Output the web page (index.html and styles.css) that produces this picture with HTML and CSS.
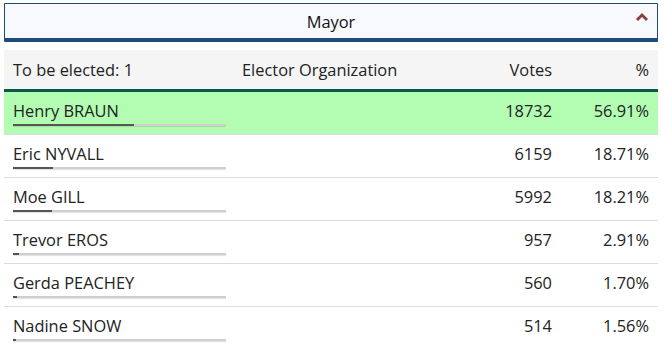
FILE: index.html
```html
<!DOCTYPE html>
<html>
<head>
<meta charset="utf-8">
<link rel="stylesheet" href="styles.css">
</head>
<body>
<div class="wrap">
  <div class="race-head">
    <span class="race-title">Mayor</span>
    <svg class="chev" width="12" height="8" viewBox="0 0 12 8"><path d="M1 7 L6 2 L11 7" fill="none" stroke="#8e3b3b" stroke-width="2.8"/></svg>
  </div>
  <table class="results">
    <thead>
      <tr><th class="c-name">To be elected: 1</th><th class="c-org">Elector Organization</th><th class="c-votes">Votes</th><th class="c-pct">%</th></tr>
    </thead>
    <tbody>
      <tr class="elected"><td class="c-name"><div>Henry BRAUN</div><div class="bar"><span style="width:56.91%"></span></div></td><td></td><td class="c-votes">18732</td><td class="c-pct">56.91%</td></tr>
      <tr><td class="c-name"><div>Eric NYVALL</div><div class="bar"><span style="width:18.71%"></span></div></td><td></td><td class="c-votes">6159</td><td class="c-pct">18.71%</td></tr>
      <tr><td class="c-name"><div>Moe GILL</div><div class="bar"><span style="width:18.21%"></span></div></td><td></td><td class="c-votes">5992</td><td class="c-pct">18.21%</td></tr>
      <tr><td class="c-name"><div>Trevor EROS</div><div class="bar"><span style="width:2.91%"></span></div></td><td></td><td class="c-votes">957</td><td class="c-pct">2.91%</td></tr>
      <tr><td class="c-name"><div>Gerda PEACHEY</div><div class="bar"><span style="width:1.70%"></span></div></td><td></td><td class="c-votes">560</td><td class="c-pct">1.70%</td></tr>
      <tr><td class="c-name"><div>Nadine SNOW</div><div class="bar"><span style="width:1.56%"></span></div></td><td></td><td class="c-votes">514</td><td class="c-pct">1.56%</td></tr>
    </tbody>
  </table>
</div>
</body>
</html>
```
FILE: styles.css
```css
html, body { margin: 0; padding: 0; background: #fff; }
body { font-family: "Open Sans", "Noto Sans", sans-serif; color: #222; font-size: 16.4px; }
.wrap { padding: 3px 6px 0 4px; }
.race-head {
  position: relative;
  height: 34px;
  background: #f7f9fd;
  border: 1px solid #1f4a7c;
  border-bottom: 4px solid #1f4a7c;
  display: flex; align-items: center; justify-content: center;
  border-radius: 1px;
}
.race-title { font-size: 16.4px; color: #111; }
.chev { position: absolute; right: 9px; top: 9px; }
.results { width: 100%; border-collapse: collapse; margin-top: 8px; }
.results th {
  background: #f5f5f5; font-weight: normal; height: 39px; padding: 0 9px;
  border-bottom: 3px solid #0c5a46; text-align: left; color: #222;
}
.results td { height: 34px; padding: 8px 9px 0; border-bottom: 1px solid #dcdcdc; vertical-align: top; line-height: 22px; }
.results tbody tr:last-child td { border-bottom: none; }
.c-name { width: 213px; padding-right: 7px !important; }
.c-org { width: 230px; }
.c-votes { text-align: right !important; }
.c-pct { text-align: right !important; width: 79px; }
tr.elected td { background: #b3fdb3; }
.bar { height: 2px; background: #cfcfcf; margin-top: 2px; box-shadow: 0 1px 1px rgba(0,0,0,0.12); }
.bar span { display: block; height: 100%; background: #555; }
```
